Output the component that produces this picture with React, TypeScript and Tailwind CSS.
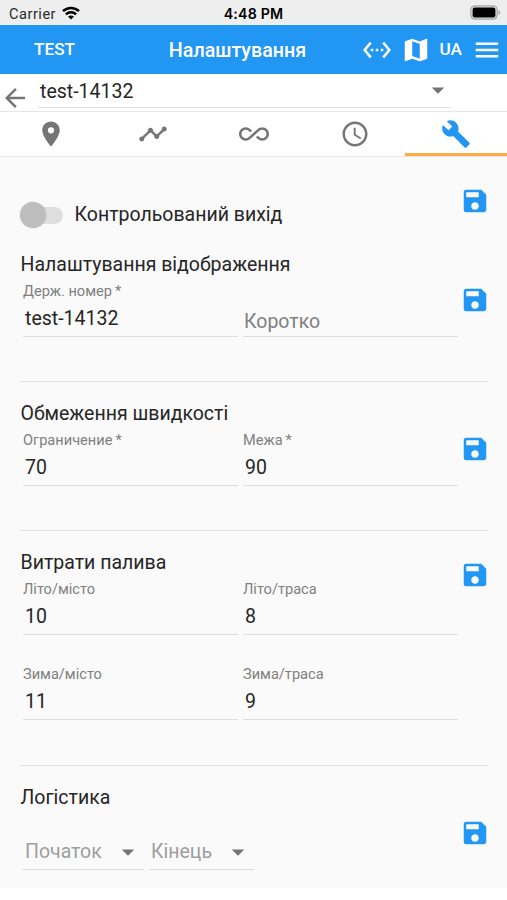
import type { ReactNode } from "react";
import {
  MdAccessTime,
  MdAllInclusive,
  MdArrowBack,
  MdArrowDropDown,
  MdMenu,
  MdPlace,
  MdSave,
  MdSettingsEthernet,
  MdTimeline,
} from "react-icons/md";

function WrenchIcon({ className }: { className?: string }) {
  return (
    <svg className={className} viewBox="0 0 24 24" fill="currentColor">
      <path d="M22.7 19l-9.1-9.1c.9-2.3.4-5-1.5-6.9-2-2-5-2.4-7.4-1.3L9 6 6 9 1.6 4.7C.4 7.1.9 10.1 2.9 12.1c1.9 1.9 4.6 2.4 6.9 1.5l9.1 9.1c.4.4 1 .4 1.4 0l2.3-2.3c.5-.4.5-1.1.1-1.4z" />
    </svg>
  );
}

function MapIcon({ className }: { className?: string }) {
  return (
    <svg className={className} viewBox="0 0 24 24" fill="currentColor">
      <path d="M20.5 3l-.16.03L15 5.1 9 3 3.36 4.9c-.21.07-.36.25-.36.48V20.5c0 .28.22.5.5.5l.16-.03L9 18.9l6 2.1 5.64-1.9c.21-.07.36-.25.36-.48V3.5c0-.28-.22-.5-.5-.5zM15 19l-6-2.11V5l6 2.11V19z" />
    </svg>
  );
}

const tabs = [
  { id: "place", icon: MdPlace },
  { id: "track", icon: MdTimeline },
  { id: "loop", icon: MdAllInclusive },
  { id: "history", icon: MdAccessTime },
  { id: "settings", icon: WrenchIcon },
];

function StatusBar() {
  return (
    <div className="relative flex h-[25px] items-center justify-between bg-[#eeeeee] pr-[6px] pl-[9px] text-black">
      <div className="flex items-center gap-[6px] pt-[3px]">
        <span className="text-[14.6px] leading-none tracking-[0.5px] text-[#2b2b2b]">Carrier</span>
        <svg className="-mt-[3px] h-[14px] w-[18px]" viewBox="0 0 18 14" fill="none" stroke="currentColor" strokeWidth={2.5}>
          <path d="M1 5.2C5.4.9 12.6.9 17 5.2" />
          <path d="M3.9 8.3C6.7 5.6 11.3 5.6 14.1 8.3" />
          <path d="M9 13.5L6 10.6C7.7 9.1 10.3 9.1 12 10.6Z" fill="currentColor" stroke="none" />
        </svg>
      </div>
      <span className="absolute inset-x-0 top-[6px] text-center font-[Inter,sans-serif] text-[14.2px] leading-4 font-semibold tracking-[0.2px]">
        4:48 PM
      </span>
      <svg className="h-[15px] w-[31px]" viewBox="0 0 31 15">
        <rect x="0.8" y="0.8" width="26.4" height="13.4" rx="4" fill="#dcdcdc" stroke="#a8a8a8" strokeWidth="1.2" />
        <rect x="2.6" y="2.6" width="22.8" height="9.8" rx="2.2" fill="#000" />
        <path d="M28.5 5.2C30.8 6 30.8 9 28.5 9.8Z" fill="#a8a8a8" />
      </svg>
    </div>
  );
}

function Header() {
  return (
    <header className="relative flex h-[49px] items-center justify-between bg-[#2196f3] pr-[5px] pl-[34px] text-white">
      <span className="text-[17.2px] leading-none font-medium">TEST</span>
      <h1 className="absolute inset-x-0 top-[14px] pr-[32px] text-center text-[19.7px] leading-6 font-medium">
        Налаштування
      </h1>
      <div className="flex items-center">
        <MdSettingsEthernet className="mr-[9px] size-[30px]" />
        <MapIcon className="mr-[9px] size-[30px]" />
        <span className="mr-[10px] text-[17.2px] leading-none font-medium">UA</span>
        <MdMenu className="size-[30px]" />
      </div>
    </header>
  );
}

function Section({
  title,
  className,
  saveClass,
  children,
}: {
  title: string;
  className: string;
  saveClass: string;
  children: ReactNode;
}) {
  return (
    <section className={`mr-[19px] ml-5 flex justify-between ${className}`}>
      <div className="pt-[18px]">
        <h2 className="h-[27px] pl-[0.5px] text-[19.5px] leading-7">{title}</h2>
        {children}
      </div>
      <button className={`-mr-[2px] size-[30px] text-[#2196f3] ${saveClass}`}>
        <MdSave className="size-[30px]" />
      </button>
    </section>
  );
}

function Field({
  label,
  required,
  value,
  placeholder,
}: {
  label?: string;
  required?: boolean;
  value?: string;
  placeholder?: string;
}) {
  return (
    <div className="w-[215px]">
      <div className="h-[26px] text-[14.6px] leading-[26px] text-[#808080]">
        {label}
        {required && <span className="ml-[3px]">*</span>}
      </div>
      <div className="h-[33px] border-b border-[#dedede] pt-px pl-[2px] text-[19.5px] leading-7">
        {value ?? <span className="relative top-[3px] -left-px text-[#808080]">{placeholder}</span>}
      </div>
    </div>
  );
}

export default function App() {
  return (
    <div className="h-[900px] w-[507px] overflow-hidden bg-white font-[Roboto,'Noto_Sans',sans-serif] text-[#262626]">
      <StatusBar />
      <Header />

      {/* Device picker */}
      <div className="flex h-[38px] border-b border-[#e6e6e6]">
        <MdArrowBack className="mt-[9px] size-[30px] text-[#757575]" />
        <div className="ml-[8px] flex h-[34px] w-[413px] items-center justify-between border-b border-[#e4e4e4] pl-[2px]">
          <span className="pt-[3px] text-[19.5px] leading-none">test-14132</span>
          <MdArrowDropDown className="-mt-[2px] -mr-[2px] size-[30px] text-[#757575]" />
        </div>
      </div>

      {/* Tabs */}
      <nav className="grid h-[45px] grid-cols-5 border-b border-[#e6e6e6]">
        {tabs.map(({ id, icon: Icon }) => (
          <button
            key={id}
            className={
              id === "settings"
                ? "-ml-px flex items-center justify-center border-b-[3px] border-[#ffab4a] pt-[3px] pl-px text-[#2196f3]"
                : "flex items-center justify-center pl-px text-[#757575]"
            }
          >
            <Icon className="size-[30px]" />
          </button>
        ))}
      </nav>

      <main className="h-[731px] bg-[#fafafa]">
        <div className="mr-[19px] ml-5 flex h-[76px] justify-between">
          <div className="mt-[44px] flex h-7 items-center">
            <div className="relative h-[26px] w-[43px]">
              <div className="absolute top-[5px] right-0 h-[17px] w-[41px] rounded-full bg-[#dedede]" />
              <div className="absolute top-0 left-0 size-[26px] rounded-full bg-[#bdbdbd] shadow-[0_0_2px_rgba(0,0,0,0.15)]" />
            </div>
            <span className="ml-[11.5px] text-[19.5px] leading-7">Контрольований вихід</span>
          </div>
          <button className="mt-[29px] -mr-[2px] size-[30px] text-[#2196f3]">
            <MdSave className="size-[30px]" />
          </button>
        </div>

        <Section title="Налаштування відображення" className="h-[149px] border-b border-[#e0e0e0]" saveClass="mt-[52px]">
          <div className="ml-[3px] flex gap-[5px]">
            <Field label="Держ. номер" required value="test-14132" />
            <Field placeholder="Коротко" />
          </div>
        </Section>

        <Section title="Обмеження швидкості" className="h-[149px] border-b border-[#e0e0e0]" saveClass="mt-[52px]">
          <div className="ml-[3px] flex gap-[5px]">
            <Field label="Ограничение" required value="70" />
            <Field label="Межа" required value="90" />
          </div>
        </Section>

        <Section title="Витрати палива" className="h-[235px] border-b border-[#e0e0e0]" saveClass="mt-[29px]">
          <div className="ml-[3px] grid grid-cols-2 gap-x-[5px] gap-y-[26px]">
            <Field label="Літо/місто" value="10" />
            <Field label="Літо/траса" value="8" />
            <Field label="Зима/місто" value="11" />
            <Field label="Зима/траса" value="9" />
          </div>
        </Section>

        <Section title="Логістика" className="h-[122px]" saveClass="mt-[52px]">
          <div className="mt-[26px] ml-[2px] flex gap-[5px] text-[19.5px] leading-7 text-[#9e9e9e]">
            <div className="flex h-[33px] w-[122px] justify-between border-b border-[#dedede] pt-px pl-[3px]">
              Початок
              <MdArrowDropDown className="-mt-px mr-px size-[30px] text-[#757575]" />
            </div>
            <div className="flex h-[33px] w-[105px] justify-between border-b border-[#dedede] pt-px pl-[2px]">
              Кінець
              <MdArrowDropDown className="-mt-px mr-px size-[30px] text-[#757575]" />
            </div>
          </div>
        </Section>
      </main>
    </div>
  );
}
